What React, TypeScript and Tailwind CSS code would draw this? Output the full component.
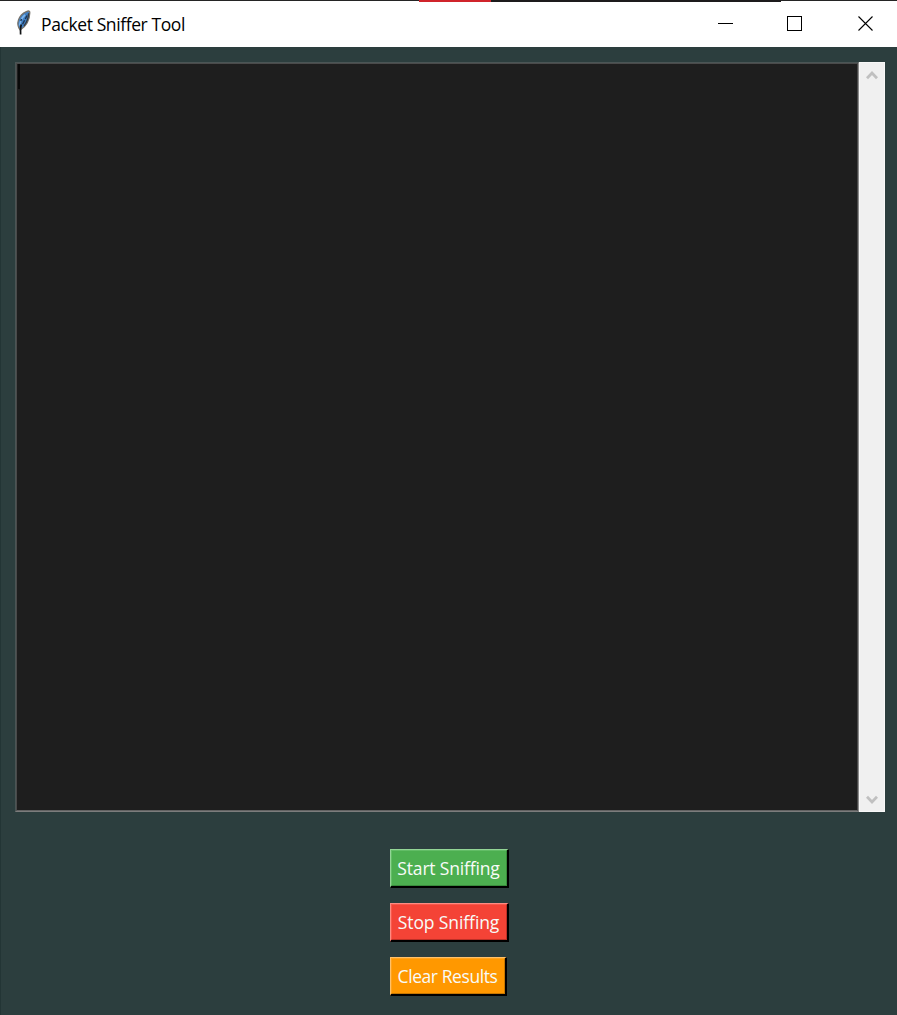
import React from "react";

function Feather() {
  return (
    <svg width="18" height="26" viewBox="0 0 18 26" className="shrink-0">
      <path d="M6.2 20C1.4 14 4.4 5.2 12.4 1.6c2.4-1.1 3.5-.6 3.4 1.2C15.6 9.5 12.8 16 6.2 20Z" fill="#3f7fc4" stroke="#77736c" strokeWidth="1.3" />
      <path d="M11 4.8C7.6 8 6 11.5 5.6 15.5" fill="none" stroke="#7db5ec" strokeWidth="1.8" />
      <path d="M14.6 3.2C14.4 8.5 12.8 12.2 10 15.8" fill="none" stroke="#343a40" strokeWidth="1.3" />
      <path d="M7.3 14.5C6.5 17 6.4 19.5 6.6 24.5" fill="none" stroke="#111315" strokeWidth="1.7" />
      <path d="M13 5.5 11.3 9M10.6 10.2l-2 4M7.5 9l-.7 2" fill="none" stroke="#1d3450" strokeWidth="1.4" />
    </svg>
  );
}

function TitleBar() {
  return (
    <header className="flex h-[47px] shrink-0 flex-col bg-white">
      <div className="flex h-[2px] shrink-0">
        <div className="h-px w-[419px] bg-[#242424]" />
        <div className="w-[72px] bg-[#d0242b]" />
        <div className="w-[290px] bg-[#1d1b1c]" />
        <div className="h-px flex-1 bg-[#242424]" />
      </div>
      <div className="flex flex-1 items-start">
        <div className="pl-[14px] pt-[8px]">
          <Feather />
        </div>
        <h1 className="ml-[9px] mt-[10px] w-[200px] whitespace-nowrap text-[17.5px] leading-6 tracking-[-0.4px] text-black">
          Packet Sniffer Tool
        </h1>
        <div className="ml-auto flex pr-[23px] pt-[14px]">
          <svg width="156" height="16" viewBox="0 0 156 16" fill="none" stroke="#000" shapeRendering="crispEdges">
            <path d="M0 7.5h15" />
            <path d="M69.5.5h14v14h-14z" />
            <path d="m140.5.5 14 14m0-14-14 14" strokeWidth="1.1" shapeRendering="auto" />
          </svg>
        </div>
      </div>
    </header>
  );
}

function Arrow({ down = false }: { down?: boolean }) {
  return (
    <svg width="12" height="10" viewBox="0 0 12 10" fill="none" stroke="#c0c0c0" strokeWidth="2.8" className={down ? "rotate-180" : ""}>
      <path d="m1 8.2 5-5.2 5 5.2" />
    </svg>
  );
}

function OutputPane() {
  return (
    <div className="ml-[15px] mt-[15px] flex h-[750px] w-[870px] shrink-0">
      <div className="w-[844px] border border-b-[#7c7c7c] border-l-[#4a5555] border-r-[#8c8c8c] border-t-[#4a5555]">
        <div className="h-full border border-b-[#626262] border-l-[#4a4a4a] border-r-[#484848] border-t-[#4a4a4a] bg-[#1e1e1e] pl-px">
          <div className="h-[25px] w-[2px] bg-[#090909]" />
        </div>
      </div>
      <div className="flex w-[26px] flex-col items-center justify-between border border-[#f8f8f8] bg-[#f0f0f0] pb-[6px] pt-[7px]">
        <Arrow />
        <Arrow down />
      </div>
    </div>
  );
}

const buttons = [
  {
    label: "Start Sniffing",
    look: "w-[119px] bg-[#4caf50] border-t-[#93d596] border-l-[#93d596]",
    edge: "border-t-[#62bd66] border-l-[#62bd66] border-b-[#398c3d] border-r-[#398c3d]",
    text: "tracking-[-0.17px]",
  },
  {
    label: "Stop Sniffing",
    look: "w-[119px] bg-[#f44336] border-t-[#ff8b82] border-l-[#ff8b82]",
    edge: "border-t-[#f8584c] border-l-[#f8584c] border-b-[#bd3027] border-r-[#bd3027]",
    text: "tracking-[-0.1px]",
  },
  {
    label: "Clear Results",
    look: "w-[117px] bg-[#ff9800] border-t-[#ffc169] border-l-[#ffc169]",
    edge: "border-t-[#ffa31d] border-l-[#ffa31d] border-b-[#c77700] border-r-[#c77700]",
    text: "tracking-[-0.43px]",
  },
];

export default function App() {
  return (
    <main className="flex h-[1015px] w-[897px] flex-col overflow-hidden bg-[#2c3e3e] font-['Open_Sans','Noto_Sans',sans-serif] [font-variant-ligatures:none]">
      <TitleBar />
      <div className="flex flex-1 flex-col border-l border-[#233535]">
        <div className="-ml-px flex flex-1 flex-col">
          <OutputPane />
          <div className="ml-[390px] mt-[37px] flex flex-col items-start gap-[15px]">
            {buttons.map((button) => (
              <button
                key={button.label}
                className={`h-[39px] border border-b-2 border-r-2 border-b-black border-r-black text-[17.5px] text-[#f8fbf8] ${button.look}`}
              >
                <span className={`flex h-full items-center justify-center whitespace-nowrap border pr-px ${button.edge} ${button.text}`}>
                  {button.label}
                </span>
              </button>
            ))}
          </div>
        </div>
      </div>
    </main>
  );
}
